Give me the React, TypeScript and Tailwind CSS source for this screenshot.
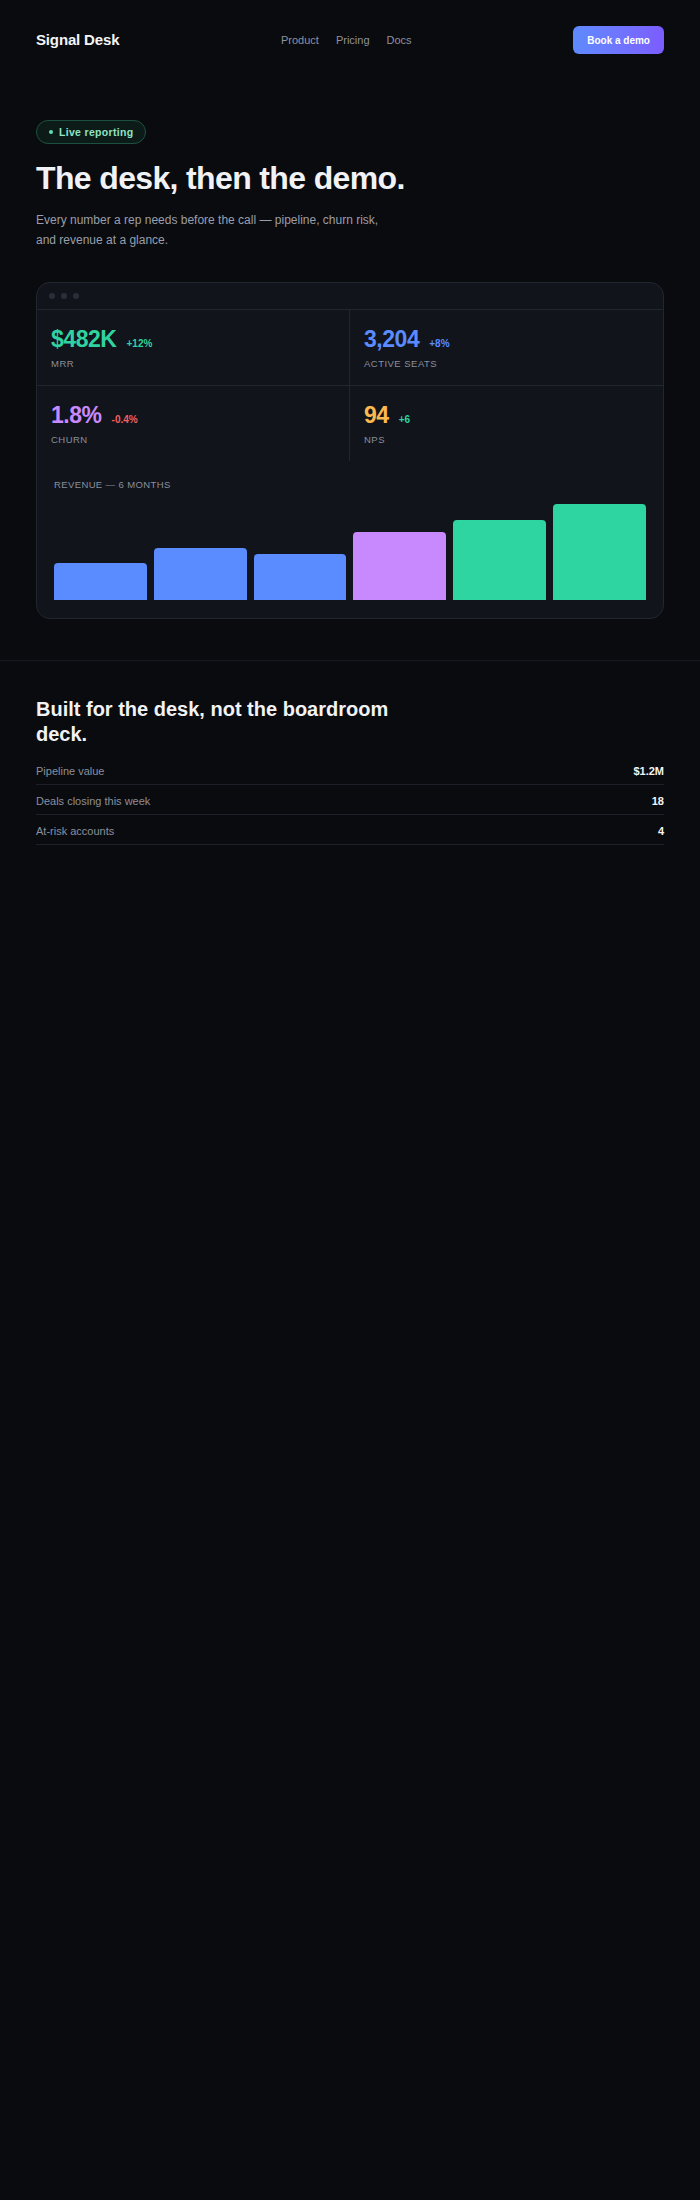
import React from "react";

const metrics = [
  { value: "$482K", delta: "+12%", label: "MRR", color: "text-[#2fd3a0]", deltaColor: "text-[#2fd3a0]", cell: "border-r border-b" },
  { value: "3,204", delta: "+8%", label: "Active seats", color: "text-[#5b8bff]", deltaColor: "text-[#5b8bff]", cell: "border-b" },
  { value: "1.8%", delta: "-0.4%", label: "Churn", color: "text-[#c98aff]", deltaColor: "text-[#f25f5f]", cell: "border-r" },
  { value: "94", delta: "+6", label: "NPS", color: "text-[#fbb94f]", deltaColor: "text-[#2fd3a0]", cell: "" },
];

const bars = [
  { h: 39, color: "bg-[#5a8bff]" },
  { h: 54, color: "bg-[#5a8bff]" },
  { h: 48, color: "bg-[#5a8bff]" },
  { h: 71, color: "bg-[#c889ff]" },
  { h: 83, color: "bg-[#2ed5a1]" },
  { h: 100, color: "bg-[#2ed5a1]" },
];

const rows = [
  { label: "Pipeline value", value: "$1.2M" },
  { label: "Deals closing this week", value: "18" },
  { label: "At-risk accounts", value: "4" },
];

function App() {
  return (
    <div className="min-h-screen bg-[#0a0b0f] font-['Liberation_Sans',Arial,sans-serif] text-[#f1f2f5]">
      <header className="flex items-center justify-between px-9 pt-[26px]">
        <a href="#" className="text-[15px] font-bold leading-[20px] tracking-[-0.01em] text-[#f3f4f6]">
          Signal Desk
        </a>
        <nav className="flex items-center gap-[17px] text-[11px] leading-[14px] text-[#8e929e]">
          <a href="#">Product</a>
          <a href="#">Pricing</a>
          <a href="#">Docs</a>
        </nav>
        <button className="h-[28px] rounded-[6px] bg-linear-to-r from-[#5d8bff] to-[#7b5cff] px-[14px] text-[10px] font-bold text-white">
          Book a demo
        </button>
      </header>

      <section className="px-9 pt-[66px] pb-[41px]">
        <div className="flex h-[24px] w-fit items-center gap-1.5 rounded-full border border-[#1c5141] bg-[#0d1b18] px-3 text-[10.5px] font-semibold leading-none tracking-[0.03em] text-[#8fe3c3]">
          <span className="h-1 w-1 rounded-full bg-[#5fe0b1]" />
          Live reporting
        </div>
        <h1 className="mt-4 text-[32px] font-bold leading-[36px] tracking-[-0.02em] text-[#f1f2f5]">
          The desk, then the demo.
        </h1>
        <p className="mt-[14px] max-w-[360px] text-[12px] leading-[20px] text-[#9a9eaa]">
          Every number a rep needs before the call — pipeline, churn risk, and revenue at a glance.
        </p>

        <div className="mt-8 overflow-hidden rounded-[14px] border border-[#22262f] bg-[#11141b]">
          <div className="flex h-[27px] items-center gap-1.5 border-b border-[#22262f] px-3">
            <span className="h-1.5 w-1.5 rounded-full bg-[#2a2e39]" />
            <span className="h-1.5 w-1.5 rounded-full bg-[#2a2e39]" />
            <span className="h-1.5 w-1.5 rounded-full bg-[#2a2e39]" />
          </div>
          <div className="grid grid-cols-2">
            {metrics.map((m) => (
              <div key={m.label} className={`${m.cell} border-[#22262f] px-[14px] pt-[15px] pb-[15px]`}>
                <div className="flex items-baseline gap-[10px]">
                  <span className={`text-[23px] font-bold leading-[28px] tracking-[-0.02em] ${m.color}`}>{m.value}</span>
                  <span className={`text-[10px] font-bold ${m.deltaColor}`}>{m.delta}</span>
                </div>
                <div className="mt-[5px] text-[9.5px] uppercase leading-[12px] tracking-[0.05em] text-[#8a8f9c]">
                  {m.label}
                </div>
              </div>
            ))}
          </div>
          <div className="px-[17px] pt-[18px] pb-[18px]">
            <div className="text-[9.5px] uppercase leading-[12px] tracking-[0.04em] text-[#8a8f9c]">
              Revenue — 6 months
            </div>
            <div className="mt-[13px] flex h-[96px] items-end gap-[7px]">
              {bars.map((b, i) => (
                <div key={i} className={`flex-1 rounded-t-[4px] ${b.color}`} style={{ height: `${b.h}%` }} />
              ))}
            </div>
          </div>
        </div>
      </section>

      <section className="border-t border-[#161920] px-9 pt-[36px]">
        <h2 className="max-w-[384px] text-[20px] font-bold leading-[25px] text-[#f1f2f5]">
          Built for the desk, not the boardroom deck.
        </h2>
        <div className="mt-2">
          {rows.map((r) => (
            <div
              key={r.label}
              className="flex items-center justify-between border-b border-[#1d2029] pt-[9px] pb-[6px] text-[11px] leading-[14px]"
            >
              <span className="text-[#8a8f9b]">{r.label}</span>
              <span className="font-bold text-[#f3f4f6]">{r.value}</span>
            </div>
          ))}
        </div>
      </section>
    </div>
  );
}

export default App;
